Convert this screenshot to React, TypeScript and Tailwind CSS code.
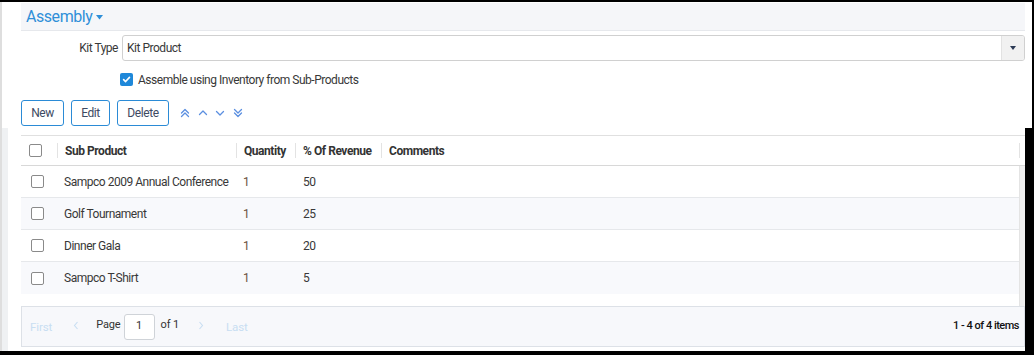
import React from "react";

const font = { fontFamily: "Roboto, 'Noto Sans', sans-serif" };

function SmallCheck({ checked = false }: { checked?: boolean }) {
  if (checked) {
    return (
      <span className="flex h-[13px] w-[13px] items-center justify-center rounded-[2px] bg-[#1f88d9]">
        <svg width="9" height="9" viewBox="0 0 10 10">
          <path d="M1.8 5.2 L4 7.3 L8.3 2.6" stroke="#fff" strokeWidth="1.8" fill="none" strokeLinecap="round" strokeLinejoin="round" />
        </svg>
      </span>
    );
  }
  return <span className="block h-[13px] w-[13px] rounded-[2px] border border-[#8a8a8a] bg-white" />;
}

function Chev({ d }: { d: string }) {
  return (
    <svg width="10" height="10" viewBox="0 0 10 10" className="block">
      <path d={d} stroke="#5b8fe0" strokeWidth="1.3" fill="none" strokeLinecap="round" strokeLinejoin="round" />
    </svg>
  );
}

const rows = [
  { name: "Sampco 2009 Annual Conference", qty: "1", rev: "50" },
  { name: "Golf Tournament", qty: "1", rev: "25" },
  { name: "Dinner Gala", qty: "1", rev: "20" },
  { name: "Sampco T-Shirt", qty: "1", rev: "5" },
];

export default function App() {
  const t = "text-[12px] tracking-[-0.48px] text-[#383838]";
  const p = "text-[11px] tracking-[-0.15px] text-[#333]";
  return (
    <div style={font} className="flex h-[355px] w-[1034px] flex-col bg-black pt-[2px] pb-[4px]">
      {/* top section */}
      <div className="mr-[2px] flex h-[126px] bg-white">
        <div className="w-[2px] bg-[#dedede]" />
        <div className="flex flex-1 flex-col pl-[19px] pr-[7px]">
          <div className="mt-[1px] flex h-[28px] items-center border-b border-[#e6e8ec] bg-[#f5f6f9] pl-[5px]">
            <span className="text-[16px] tracking-[-0.45px] text-[#2f8fd8]">Assembly</span>
            <svg width="7" height="5" viewBox="0 0 7 5" className="ml-[4px] mt-[1px]">
              <path d="M0 0 L7 0 L3.5 4.5 Z" fill="#2f8fd8" />
            </svg>
          </div>
          <div className="mt-[4px] flex h-[26px] items-center">
            <div className={`w-[98px] pr-[1px] text-right ${t}`}>Kit Type</div>
            <div className="ml-[3px] flex h-[26px] flex-1 items-center overflow-hidden rounded-[3px] border border-[#d0d0d0] bg-white">
              <span className={`flex-1 pl-[4px] ${t}`}>Kit Product</span>
              <div className="flex h-full w-[23px] items-center justify-center border-l border-[#e2e2e2] bg-[#f1f1f1]">
                <svg width="6" height="4" viewBox="0 0 6 4">
                  <path d="M0 0 L6 0 L3 4 Z" fill="#2c3a55" />
                </svg>
              </div>
            </div>
          </div>
          <div className="mt-[12px] flex h-[13px] items-center pl-[99px]">
            <SmallCheck checked />
            <span className={`ml-[5px] ${t}`}>Assemble using Inventory from Sub-Products</span>
          </div>
          <div className="mt-[14px] flex h-[26px] items-center">
            <button className="h-[26px] w-[43px] rounded-[3px] border border-[#2b8bd6] bg-white text-[12px] tracking-[-0.4px] text-[#3d4a63]">New</button>
            <button className="ml-[7px] h-[26px] w-[39px] rounded-[3px] border border-[#2b8bd6] bg-white text-[12px] tracking-[-0.4px] text-[#3d4a63]">Edit</button>
            <button className="ml-[7px] h-[26px] w-[52px] rounded-[3px] border border-[#2b8bd6] bg-white text-[12px] tracking-[-0.4px] text-[#3d4a63]">Delete</button>
            <div className="ml-[11px] flex items-center gap-[7.5px]">
              <Chev d="M1.5 5 L5 1.5 L8.5 5 M1.5 8.5 L5 5 L8.5 8.5" />
              <Chev d="M1.5 6.5 L5 3 L8.5 6.5" />
              <Chev d="M1.5 3.5 L5 7 L8.5 3.5" />
              <Chev d="M1.5 1.5 L5 5 L8.5 1.5 M1.5 5 L5 8.5 L8.5 5" />
            </div>
          </div>
        </div>
      </div>
      {/* bottom section */}
      <div className="mr-[9px] flex flex-1 bg-white">
        <div className="w-[2px] bg-[#dedede]" />
        <div className="w-[6px] bg-[#eff1f3]" />
        <div className="flex flex-1 flex-col pl-[13px] pt-[7px]">
          {/* grid header */}
          <div className="flex h-[31px] items-center border-t border-b border-[#e0e0e0] border-b-[#d8d8d8]">
            <div className="flex w-[36px] items-center pl-[8px]">
              <SmallCheck />
            </div>
            {[
              { w: "w-[179px]", label: "Sub Product" },
              { w: "w-[59px]", label: "Quantity" },
              { w: "w-[86px]", label: "% Of Revenue" },
              { w: "w-[638px]", label: "Comments" },
            ].map((c) => (
              <div key={c.label} className={`flex h-full items-center ${c.w}`}>
                <span className="h-[15px] w-px bg-[#e3e3e3]" />
                <span className="pl-[7px] text-[12px] font-bold tracking-[-0.45px] text-[#333]">{c.label}</span>
              </div>
            ))}
            <span className="h-[15px] w-px bg-[#e3e3e3]" />
          </div>
          {/* grid body */}
          <div className="flex h-[140px]">
            <div className="flex flex-1 flex-col">
              {rows.map((r, i) => (
                <div
                  key={r.name}
                  className={`flex h-[32px] items-center ${i < 3 ? "border-b border-[#e6e8eb]" : ""} ${i % 2 === 1 ? "bg-[#f8f9fc]" : "bg-white"}`}
                >
                  <div className="flex w-[36px] items-center pl-[10px]">
                    <SmallCheck />
                  </div>
                  <div className={`w-[179px] pl-[7px] ${t}`}>{r.name}</div>
                  <div className="w-[59px] pl-[7px] text-[12px] tracking-[-0.4px] text-[#6b5240]">{r.qty}</div>
                  <div className={`w-[86px] pl-[8px] ${t}`}>{r.rev}</div>
                  <div className="flex-1" />
                </div>
              ))}
            </div>
            <div className="w-[6px] border-l border-[#e4e4e4] bg-[#f0f0f0]" />
          </div>
          {/* pager */}
          <div className="flex h-[41px] items-center border border-[#dde1e7] bg-[#f7f8fb] pl-[8px] pr-[5px]">
            <span className="mt-[3px] text-[11.5px] tracking-[-0.1px] text-[#c8def2]">First</span>
            <svg width="6" height="9" viewBox="0 0 6 9" className="ml-[21px] mb-[3px]">
              <path d="M4.5 1 L1.5 4.5 L4.5 8" stroke="#c8def2" strokeWidth="1.1" fill="none" />
            </svg>
            <span className={`ml-[17px] mb-[2px] ${p}`}>Page</span>
            <div className={`ml-[3px] flex h-[26px] w-[31px] items-center justify-center rounded-[3px] border border-[#cfd3d8] bg-white ${p}`}>1</div>
            <span className={`ml-[6px] mb-[2px] ${p}`}>of 1</span>
            <svg width="6" height="9" viewBox="0 0 6 9" className="ml-[19px] mb-[3px]">
              <path d="M1.5 1 L4.5 4.5 L1.5 8" stroke="#c8def2" strokeWidth="1.1" fill="none" />
            </svg>
            <span className="ml-[22px] mt-[3px] text-[11.5px] tracking-[-0.1px] text-[#c8def2]">Last</span>
            <span className="ml-auto text-[11px] font-medium tracking-[-0.5px] text-[#111]">1 - 4 of 4 items</span>
          </div>
        </div>
      </div>
    </div>
  );
}
